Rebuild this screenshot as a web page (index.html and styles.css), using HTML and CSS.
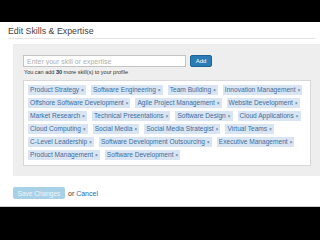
FILE: index.html
```html
<!DOCTYPE html>
<html lang="en">
<head>
    <meta charset="UTF-8">
    <meta name="viewport" content="width=device-width, initial-scale=1.0">
    <title>Edit Skills &amp; Expertise</title>
    <link rel="stylesheet" href="styles.css">
</head>
<body>
    <div class="topbar"></div>

    <div class="page">
        <h1 class="title">Edit Skills &amp; Expertise</h1>

        <!-- Skills editor -->
        <div class="panel">
            <div class="add-row">
                <input type="text" class="skill-input" placeholder="Enter your skill or expertise">
                <button class="add-btn">Add</button>
            </div>
            <p class="hint">You can add <b>30</b> more skill(s) to your profile</p>

            <div class="skills">
                <span class="skill">Product Strategy <i>×</i></span>
                <span class="skill">Software Engineering <i>×</i></span>
                <span class="skill">Team Building <i>×</i></span>
                <span class="skill">Innovation Management <i>×</i></span>
                <span class="skill">Offshore Software Development <i>×</i></span>
                <span class="skill">Agile Project Management <i>×</i></span>
                <span class="skill">Website Development <i>×</i></span>
                <span class="skill">Market Research <i>×</i></span>
                <span class="skill">Technical Presentations <i>×</i></span>
                <span class="skill">Software Design <i>×</i></span>
                <span class="skill">Cloud Applications <i>×</i></span>
                <span class="skill">Cloud Computing <i>×</i></span>
                <span class="skill">Social Media <i>×</i></span>
                <span class="skill">Social Media Strategist <i>×</i></span>
                <span class="skill">Virtual Teams <i>×</i></span>
                <span class="skill">C-Level Leadership <i>×</i></span>
                <span class="skill">Software Development Outsourcing <i>×</i></span>
                <span class="skill">Executive Management <i>×</i></span>
                <span class="skill">Product Management <i>×</i></span>
                <span class="skill">Software Development <i>×</i></span>
            </div>
        </div>

        <div class="actions">
            <button class="save-btn" disabled>Save Changes</button>
            <span class="or">or <a href="#">Cancel</a></span>
        </div>
    </div>
</body>
</html>
```

FILE: styles.css
```css
html, body {
    height: 100%;
}
body {
    margin: 0;
    background-color: #000;
    font-family: "Liberation Sans", Arial, sans-serif;
    color: #333;
}
.topbar {
    height: 22px;
    background-color: #000;
}
.page {
    background-color: #fff;
    height: 184px;
    border-bottom: 1px solid #d0d0d0;
    overflow: hidden;
}
.title {
    margin: 0 5px 0 8px;
    padding: 5px 0 2px 0;
    font-size: 8.8px;
    line-height: 9px;
    font-weight: normal;
    color: #444;
    border-bottom: 1px solid #e4e4e4;
}
.panel {
    margin: 5px 0 0 13px;
    padding: 11px 8px 10px 10px;
    background-color: #eeeeee;
}
.add-row {
    display: flex;
    align-items: center;
}
.skill-input {
    width: 163px;
    height: 12px;
    box-sizing: border-box;
    margin: 0;
    padding: 0 3px;
    border: 1px solid #c4c4c4;
    font-family: inherit;
    font-size: 7px;
    background-color: #fff;
}
.skill-input::placeholder {
    color: #b0b0b0;
}
.add-btn {
    margin-left: 4px;
    width: 22px;
    height: 12px;
    padding: 0;
    background-color: #2b7bb4;
    border: 1px solid #1f6396;
    border-radius: 2px;
    color: #fff;
    font-family: inherit;
    font-size: 6px;
}
.hint {
    margin: 2px 0 5px 1px;
    font-size: 5.5px;
    line-height: 6px;
    color: #333;
}
.skills {
    display: flex;
    flex-wrap: wrap;
    gap: 3px 5px;
    background-color: #fff;
    border: 1px solid #d8d8d8;
    padding: 4px 4px 5px 4px;
    width: 288px;
    box-sizing: border-box;
}
.skill {
    height: 10px;
    line-height: 10px;
    padding: 0 2px;
    background-color: #d9e5f2;
    color: #3e6e9f;
    font-size: 6.6px;
    white-space: nowrap;
}
.skill i {
    font-style: normal;
    font-size: 5px;
}
.actions {
    display: flex;
    align-items: center;
    margin: 11px 0 0 13px;
}
.save-btn {
    width: 52px;
    height: 12px;
    padding: 0;
    background-color: #a8d0e6;
    border: none;
    border-radius: 2px;
    color: #eef6fb;
    font-family: inherit;
    font-size: 6.5px;
}
.or {
    margin-left: 3px;
    font-size: 7px;
    color: #333;
}
.or a {
    color: #2b6aa8;
    text-decoration: none;
}
```
